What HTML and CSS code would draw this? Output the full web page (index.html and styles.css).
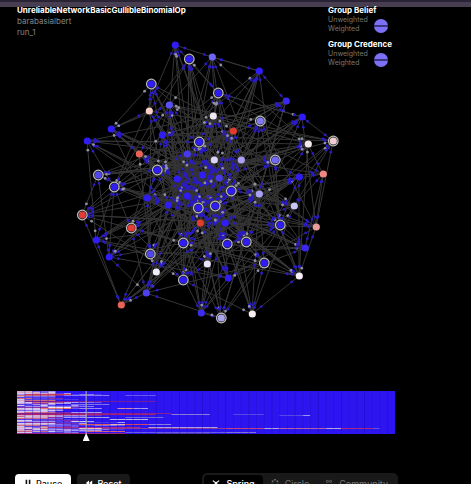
FILE: index.html
```html
<!DOCTYPE html>
<html lang="en">
<head>
    <meta charset="UTF-8">
    <meta name="viewport" content="width=device-width, initial-scale=1.0">
    <title>UnreliableNetworkBasicGullibleBinomialOp</title>
    <link rel="stylesheet" href="styles.css">
</head>
<body>
    <div class="topbar"></div>

    <main>
        <section class="stage">
            <svg id="graph" class="graph" viewBox="0 7 471 384" role="img" aria-label="Network"></svg>
            <header class="overlay">
                <div class="run">
                    <h1>UnreliableNetworkBasicGullibleBinomialOp</h1>
                    <p>barabasialbert</p>
                    <p>run_1</p>
                </div>
                <div class="groups">
                    <div class="group">
                        <h2>Group Belief</h2>
                        <div class="group-row">
                            <div class="group-labels">
                                <p>Unweighted</p>
                                <p>Weighted</p>
                            </div>
                            <span class="split-dot"></span>
                        </div>
                    </div>
                    <div class="group">
                        <h2>Group Credence</h2>
                        <div class="group-row">
                            <div class="group-labels">
                                <p>Unweighted</p>
                                <p>Weighted</p>
                            </div>
                            <span class="split-dot"></span>
                        </div>
                    </div>
                </div>
            </header>
        </section>

        <section class="timeline">
            <svg id="heatmap" class="heatmap" viewBox="0 0 49 43" preserveAspectRatio="none" aria-hidden="true"></svg>
            <input class="scrubber" type="range" min="0" max="1000" value="177" aria-label="Time step">
        </section>

        <footer class="controls">
            <div class="playback">
                <button type="button" class="btn btn-light">
                    <svg class="icon" viewBox="0 0 10 10"><path d="M3 1v8M7 1v8" stroke-width="2"/></svg>
                    Pause
                </button>
                <button type="button" class="btn btn-dark">
                    <svg class="icon" viewBox="0 0 10 10"><path class="solid" d="M5 2v6L1 5zM9 2v6L5 5z"/></svg>
                    Reset
                </button>
            </div>
            <div class="layouts">
                <button type="button" class="tab active">
                    <svg class="icon" viewBox="0 0 10 10"><path d="M1 2l4 3 4-3M5 5v4M1 9l4-4 4 4" stroke-width="1.4"/></svg>
                    Spring
                </button>
                <button type="button" class="tab">
                    <svg class="icon" viewBox="0 0 10 10"><path class="solid" d="M4 0h2v2H4zM1 2h2v2H1zM7 2h2v2H7zM0 6h2v2H0zM8 6h2v2H8zM4 8h2v2H4z"/></svg>
                    Circle
                </button>
                <button type="button" class="tab">
                    <svg class="icon" viewBox="0 0 10 10"><circle cx="3" cy="3" r="1.3"/><circle cx="7" cy="3" r="1.3"/><path d="M1 9V7h3v2M6 9V7h3v2"/></svg>
                    Community
                </button>
            </div>
        </footer>
    </main>

    <script src="script.js"></script>
</body>
</html>
```
FILE: styles.css
```css
* {
    box-sizing: border-box;
}

body {
    margin: 0;
    height: 100vh;
    overflow: hidden;
    background-color: #000;
    color: #fff;
    font-family: Inter, 'Open Sans', sans-serif;
    font-size: 8px;
}

h1, h2, p {
    margin: 0;
}

.topbar {
    height: 7px;
    background: linear-gradient(#2a2336 2px, #483e51 2px);
}

.stage {
    position: relative;
}

.graph {
    display: block;
    width: 100%;
}

.overlay {
    position: absolute;
    top: -2px;
    left: 0;
    right: 0;
    display: flex;
    justify-content: space-between;
    padding: 0 79px 0 17px;
}

.run h1 {
    font-size: 8px;
    line-height: 11px;
}

.run p {
    font-size: 8px;
    line-height: 11px;
    color: #858585;
}

.groups {
    display: flex;
    flex-direction: column;
    gap: 6px;
}

.group h2 {
    font-size: 8px;
    line-height: 10px;
}

.group-row {
    display: flex;
    align-items: center;
    gap: 6px;
}

.group-labels p {
    font-size: 7px;
    line-height: 9px;
    color: #777;
}

.split-dot {
    width: 14px;
    height: 14px;
    margin-top: 3px;
    border-radius: 50%;
    background: linear-gradient(#7c70f7 6px, #3c347e 6px, #3c347e 8px, #7c70f7 8px);
}

.timeline {
    position: relative;
    margin: 0 76px 0 17px;
}

.heatmap {
    display: block;
    width: 100%;
    height: 43px;
    background-color: #2c15f0;
}

/* thumb hangs below the heatmap */
.scrubber {
    position: absolute;
    top: 0;
    left: 0;
    width: 100%;
    height: 51px;
    margin: 0;
    appearance: none;
    background: none;
    cursor: pointer;
}

.scrubber::-webkit-slider-thumb {
    appearance: none;
    width: 7px;
    height: 51px;
    background: linear-gradient(#b5b5b8 43px, #fff 43px);
    clip-path: polygon(3px 0, 4px 0, 4px 43px, 7px 50px, 0 50px, 3px 43px);
}

.controls {
    display: flex;
    justify-content: space-between;
    margin-top: 39px;
    padding: 0 73px 0 15px;
}

.playback {
    display: flex;
    gap: 6px;
    padding-top: 1px;
}

button {
    display: flex;
    align-items: center;
    justify-content: center;
    gap: 4px;
    border: none;
    border-radius: 4px;
    font-family: inherit;
    font-size: 9px;
    cursor: pointer;
}

.btn {
    height: 18px;
    padding: 0 9px;
    font-weight: 500;
}

.btn-light {
    background-color: #fff;
    color: #111;
}

.btn-dark {
    padding: 0 8px;
    background-color: #19191a;
    color: #fff;
}

.layouts {
    display: flex;
    height: 20px;
    padding: 2px;
    border-radius: 5px;
    background-color: #19191a;
}

.tab {
    gap: 6px;
    height: 16px;
    padding: 0 8px;
    background: none;
    color: #777;
}

.tab.active {
    background-color: #000;
    color: #fff;
    font-weight: 500;
}

.icon {
    width: 8px;
    height: 8px;
    fill: none;
    stroke: currentColor;
}

.icon .solid {
    fill: currentColor;
    stroke: none;
}
```
FILE: script.js
```js
const SVG_NS = 'http://www.w3.org/2000/svg';

// x, y, color, highlighted
const nodes = [
    [175, 45, '#301cf5'], [189, 59, '#301cf5', 1], [212, 57, '#6f66f5'], [259, 71, '#301cf5'],
    [151, 84, '#301cf5', 1], [169, 105, '#5a4ff5'], [149, 111, '#f8cfc9'], [218, 93, '#301cf5', 1],
    [286, 101, '#3a28f0'], [302, 117, '#301cf5'], [213, 116, '#eee8f0'], [260, 121, '#8078f5', 1],
    [233, 131, '#e03c30'], [333, 141, '#efccd2', 1], [308, 144, '#f4e8ee'], [87, 141, '#301cf5'],
    [111, 129, '#301cf5'], [162, 135, '#301cf5'], [199, 142, '#301cf5', 1], [139, 154, '#e86458'],
    [187, 154, '#4638ed'], [214, 160, '#dcd4f8'], [241, 160, '#aaa0f5'], [275, 160, '#7168f5', 1],
    [157, 170, '#301cf5', 1], [98, 175, '#5246ef', 1], [114, 187, '#301cf5', 1], [177, 179, '#301cf5'],
    [202, 175, '#301cf5'], [219, 178, '#4638ed'], [299, 177, '#301cf5'], [323, 174, '#ee8880'],
    [147, 198, '#301cf5'], [187, 196, '#301cf5'], [231, 191, '#301cf5', 1], [259, 194, '#aaa0f5'],
    [168, 205, '#301cf5'], [198, 208, '#301cf5', 1], [215, 206, '#301cf5', 1], [294, 206, '#c8c5f8'],
    [82, 215, '#e43c34', 1], [131, 228, '#e43c34', 1], [200, 223, '#e03c30'], [225, 223, '#301cf5'],
    [280, 225, '#301cf5', 1], [316, 227, '#eb9c9c'], [96, 240, '#301cf5'], [109, 257, '#301cf5'],
    [150, 254, '#5246ef', 1], [183, 243, '#301cf5', 1], [227, 244, '#301cf5', 1], [246, 242, '#301cf5', 1],
    [305, 248, '#3a28f0'], [156, 272, '#f1ecfa'], [207, 264, '#e8e2fa'], [264, 263, '#301cf5', 1],
    [299, 276, '#f6eef5'], [183, 280, '#301cf5', 1], [228, 278, '#301cf5'], [146, 293, '#4d40ef'],
    [121, 305, '#e86458'], [201, 313, '#3c2cf0'], [221, 318, '#aaa6ed', 1], [252, 314, '#f6eef0']
];

let seed = 17;
function random() {
    seed = (seed * 16807) % 2147483647;
    return seed / 2147483647;
}

function add(parent, tag, attrs) {
    const el = document.createElementNS(SVG_NS, tag);
    for (const key in attrs) {
        el.setAttribute(key, attrs[key]);
    }
    parent.appendChild(el);
}

// central nodes are the hubs
function pickTarget(from) {
    while (true) {
        const i = Math.floor(random() * nodes.length);
        const dist = Math.hypot(nodes[i][0] - 205, nodes[i][1] - 190);
        if (i !== from && random() < 1500 / (1500 + dist * dist)) {
            return i;
        }
    }
}

function drawGraph() {
    const svg = document.getElementById('graph');
    const edges = [];
    nodes.forEach((node, i) => {
        for (let n = 0; n < 7; n++) {
            edges.push([i, pickTarget(i)]);
        }
    });
    // outer links
    [[0, 2], [2, 3], [3, 8], [9, 13], [13, 45], [31, 45], [15, 46], [46, 60], [25, 40], [60, 59], [61, 62], [59, 62], [16, 4], [56, 44], [62, 55], [45, 56]]
        .forEach(pair => edges.push(pair));

    edges.forEach(([a, b]) => {
        add(svg, 'line', { x1: nodes[a][0], y1: nodes[a][1], x2: nodes[b][0], y2: nodes[b][1], stroke: '#353536', 'stroke-width': 1 });
    });

    // messages arriving at each end of an edge
    edges.forEach(([a, b]) => {
        [[a, b], [b, a]].forEach(([from, to]) => {
            const dx = nodes[to][0] - nodes[from][0];
            const dy = nodes[to][1] - nodes[from][1];
            const len = Math.hypot(dx, dy);
            const step = 7 + random() * 5;
            add(svg, 'circle', {
                cx: nodes[from][0] + dx / len * step,
                cy: nodes[from][1] + dy / len * step,
                r: 1.4,
                fill: random() < 0.16 ? '#9090a0' : '#2a1bc4'
            });
        });
    });

    nodes.forEach(([x, y, color, ring]) => {
        if (ring) {
            add(svg, 'circle', { cx: x + 0.3, cy: y, r: 4.8, fill: '#222', stroke: '#bcbcbc', 'stroke-width': 1.2 });
        }
        add(svg, 'circle', { cx: x + 0.3, cy: y, r: 3.6, fill: color });
    });
}

// row, first column, last column, color
const streaks = [
    [3, 1, 7, '#c83c60'], [4, 6, 12, '#8a7cf0'], [4, 14, 18, '#6a58f0'], [10, 1, 18, '#7a1c9c'],
    [13, 7, 12, '#8274e8'], [16, 4, 7, '#f0e4f0'], [17, 3, 7, '#e87868'], [17, 8, 11, '#9a8cf0'],
    [17, 13, 15, '#d88ca0'], [17, 15, 17, '#a898e8'], [22, 0, 20, '#8c2090'], [23, 0, 18, '#ad2070'],
    [23, 20, 25, '#8a80d8'], [23, 28, 32, '#5848e8'], [24, 34, 37, '#5848e8'], [24, 37, 38, '#a090f0'],
    [26, 6, 12, '#a89ce8'], [26, 14, 19, '#7064e0'], [28, 12, 17, '#c0b4ee'], [30, 7, 9, '#d0c8f0'],
    [33, 8, 12, '#e85c50'], [33, 12, 14, '#e8b0b0'], [33, 14, 17, '#d84858'], [33, 17, 20, '#9080dc'],
    [36, 4, 16, '#a82c88'], [36, 17, 26, '#b0a0e0'], [37, 8, 11, '#e8c0c8'], [37, 11, 28, '#8c3c9c'],
    [37, 27, 32, '#c04478'], [37, 32, 34, '#b8a0dc'], [37, 34, 40, '#b860a0'], [37, 40, 42, '#b8a8e0'],
    [37, 42, 46, '#b02878'], [37, 46, 47, '#6a50d8'], [40, 9, 14, '#d86878'], [41, 14, 27, '#6c5ce0'],
    [41, 27, 31, '#8074d0'], [42, 0, 14, '#9c2484'], [42, 18, 25, '#4c30c8']
];

function drawHeatmap() {
    const svg = document.getElementById('heatmap');
    const early = ['#f4c4c0', '#e87870', '#f0e4f0', '#b8a8f0', '#8c78ee', '#6048e8', '#a03898'];
    for (let row = 0; row < 43; row++) {
        // how long this agent takes to settle
        const settle = 4 + random() * 7 + (row > 30 ? 3 : 0);
        let color = early[row % 3];
        for (let col = 0; col < settle; col++) {
            if (random() < 0.45) {
                // pale values fade out after the first steps
                const from = col > 3 ? 2 : 0;
                color = early[from + Math.floor(random() * (early.length - from))];
            }
            add(svg, 'rect', { x: col, y: row, width: 1, height: 1, fill: color, opacity: col > 4 ? 0.65 : 0.85 });
        }
    }
    streaks.forEach(([row, start, end, fill]) => {
        add(svg, 'rect', { x: start, y: row, width: end - start, height: 1, fill });
    });
    for (let col = 1; col < 49; col++) {
        add(svg, 'rect', { x: col, y: 0, width: 0.1, height: 43, fill: '#1c0ca0', opacity: col % 3 ? 0.3 : 0.5 });
    }
}

drawGraph();
drawHeatmap();
```
